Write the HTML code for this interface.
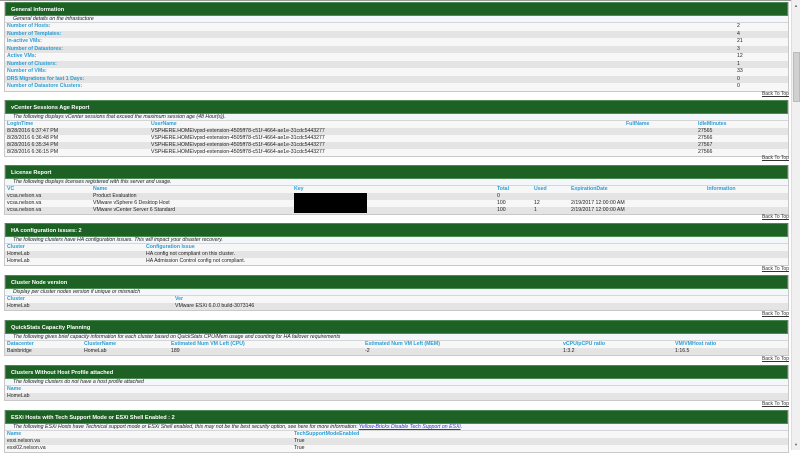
<!DOCTYPE html>
<html><head><meta charset="utf-8"><style>
*{margin:0;padding:0;box-sizing:border-box}
body{width:800px;height:450px;overflow:hidden;background:#fff;font-family:"Liberation Sans",Verdana,sans-serif;font-size:5.2px;color:#222;position:relative}
.sec{position:absolute;left:4px;width:785px;border:1px solid #c8c8c8;border-top:none;background:#f7f7f7}
.h{height:14px;background:#1e6124;color:#fff;font-weight:bold;font-size:5.6px;line-height:14px;padding-left:5px;border:1px solid #4e8a53}
.s{height:7px;line-height:7px;font-style:italic;padding-left:8px;background:#f3f6fa;border-bottom:1px solid #d6d6d6}
.r{position:relative;height:7px;line-height:7px}
.g .r{height:7.5px;line-height:7.5px}
.r span{position:absolute;top:0;white-space:nowrap}
.r.a{background:#e4e4e4}
.th span{color:#2a9fd6;font-weight:bold}
.lab span{color:#2a9fd6;font-weight:bold}
.bt{position:absolute;right:11px;font-size:5px;text-decoration:underline;color:#333}
.sb{position:absolute;right:0;top:0;width:9px;height:450px;background:#f0f0f0;border-left:1px solid #ddd}
</style></head><body>
<div style="position:absolute;left:0;top:0;width:791px;height:1px;background:#999"></div>

<div class="sec g" style="top:2px">
<div class="h">General Information</div>
<div class="s">General details on the infrastucture</div>
<div class="r lab"><span style="left:2px">Number of Hosts:</span><span style="left:732px;color:#222;font-weight:normal">2</span></div>
<div class="r lab a"><span style="left:2px">Number of Templates:</span><span style="left:732px;color:#222;font-weight:normal">4</span></div>
<div class="r lab"><span style="left:2px">In-active VMs:</span><span style="left:732px;color:#222;font-weight:normal">21</span></div>
<div class="r lab a"><span style="left:2px">Number of Datastores:</span><span style="left:732px;color:#222;font-weight:normal">3</span></div>
<div class="r lab"><span style="left:2px">Active VMs:</span><span style="left:732px;color:#222;font-weight:normal">12</span></div>
<div class="r lab a"><span style="left:2px">Number of Clusters:</span><span style="left:732px;color:#222;font-weight:normal">1</span></div>
<div class="r lab"><span style="left:2px">Number of VMs:</span><span style="left:732px;color:#222;font-weight:normal">33</span></div>
<div class="r lab a"><span style="left:2px">DRS Migrations for last 1 Days:</span><span style="left:732px;color:#222;font-weight:normal">0</span></div>
<div class="r lab"><span style="left:2px">Number of Datastore Clusters:</span><span style="left:732px;color:#222;font-weight:normal">0</span></div>
</div>
<div class="bt" style="top:91px">Back To Top</div>

<div class="sec" style="top:100px">
<div class="h">vCenter Sessions Age Report</div>
<div class="s">The following displays vCenter sessions that exceed the maximum session age (48 Hour(s)).</div>
<div class="r th"><span style="left:2px">LoginTime</span><span style="left:146px">UserName</span><span style="left:621px">FullName</span><span style="left:693px">IdleMinutes</span></div>
<div class="r a"><span style="left:2px">8/28/2016 6:37:47 PM</span><span style="left:146px">VSPHERE.HOME\vpxd-extension-4505ff78-c51f-4664-ae1e-31cdc5443277</span><span style="left:693px">27565</span></div>
<div class="r"><span style="left:2px">8/28/2016 6:36:48 PM</span><span style="left:146px">VSPHERE.HOME\vpxd-extension-4505ff78-c51f-4664-ae1e-31cdc5443277</span><span style="left:693px">27566</span></div>
<div class="r a"><span style="left:2px">8/28/2016 6:35:34 PM</span><span style="left:146px">VSPHERE.HOME\vpxd-extension-4505ff78-c51f-4664-ae1e-31cdc5443277</span><span style="left:693px">27567</span></div>
<div class="r"><span style="left:2px">8/28/2016 6:36:15 PM</span><span style="left:146px">VSPHERE.HOME\vpxd-extension-4505ff78-c51f-4664-ae1e-31cdc5443277</span><span style="left:693px">27566</span></div>
</div>
<div class="bt" style="top:155px">Back To Top</div>

<div class="sec" style="top:165px">
<div class="h">License Report</div>
<div class="s">The following displays licenses registered with this server and usage.</div>
<div class="r th"><span style="left:2px">VC</span><span style="left:88px">Name</span><span style="left:289px">Key</span><span style="left:492px">Total</span><span style="left:529px">Used</span><span style="left:566px">ExpirationDate</span><span style="left:702px">Information</span></div>
<div class="r a"><span style="left:2px">vcsa.nelson.va</span><span style="left:88px">Product Evaluation</span><span style="left:492px">0</span></div>
<div class="r"><span style="left:2px">vcsa.nelson.va</span><span style="left:88px">VMware vSphere 6 Desktop Host</span><span style="left:492px">100</span><span style="left:529px">12</span><span style="left:566px">2/19/2017 12:00:00 AM</span></div>
<div class="r a"><span style="left:2px">vcsa.nelson.va</span><span style="left:88px">VMware vCenter Server 6 Standard</span><span style="left:492px">100</span><span style="left:529px">1</span><span style="left:566px">2/19/2017 12:00:00 AM</span></div>
<div style="position:absolute;left:289px;top:28px;width:73px;height:20px;background:#000"></div>
</div>
<div class="bt" style="top:214px">Back To Top</div>

<div class="sec" style="top:223px">
<div class="h">HA configuration issues: 2</div>
<div class="s">The following clusters have HA configuration issues. This will impact your disaster recovery.</div>
<div class="r th"><span style="left:2px">Cluster</span><span style="left:141px">Configuration Issue</span></div>
<div class="r a"><span style="left:2px">HomeLab</span><span style="left:141px">HA config not compliant on this cluster.</span></div>
<div class="r"><span style="left:2px">HomeLab</span><span style="left:141px">HA Admission Control config not compliant.</span></div>
</div>
<div class="bt" style="top:266px">Back To Top</div>

<div class="sec" style="top:275px">
<div class="h">Cluster Node version</div>
<div class="s">Display per cluster nodes version if unique or mismatch</div>
<div class="r th"><span style="left:2px">Cluster</span><span style="left:170px">Ver</span></div>
<div class="r a"><span style="left:2px">HomeLab</span><span style="left:170px">VMware ESXi 6.0.0 build-3073146</span></div>
</div>
<div class="bt" style="top:311px">Back To Top</div>

<div class="sec" style="top:320px">
<div class="h">QuickStats Capacity Planning</div>
<div class="s">The following gives brief capacity information for each cluster based on QuickStats CPU/Mem usage and counting for HA failover requirements</div>
<div class="r th"><span style="left:2px">Datacenter</span><span style="left:79px">ClusterName</span><span style="left:166px">Estimated Num VM Left (CPU)</span><span style="left:360px">Estimated Num VM Left (MEM)</span><span style="left:558px">vCPU/pCPU ratio</span><span style="left:670px">VM/VMHost ratio</span></div>
<div class="r a"><span style="left:2px">Bainbridge</span><span style="left:79px">HomeLab</span><span style="left:166px">189</span><span style="left:360px">-2</span><span style="left:558px">1:3.2</span><span style="left:670px">1:16.5</span></div>
</div>
<div class="bt" style="top:356px">Back To Top</div>

<div class="sec" style="top:365px">
<div class="h">Clusters Without Host Profile attached</div>
<div class="s">The following clusters do not have a host profile attached</div>
<div class="r th"><span style="left:2px">Name</span></div>
<div class="r a"><span style="left:2px">HomeLab</span></div>
</div>
<div class="bt" style="top:401px">Back To Top</div>

<div class="sec" style="top:410px">
<div class="h">ESXi Hosts with Tech Support Mode or ESXi Shell Enabled : 2</div>
<div class="s">The following ESXi Hosts have Technical support mode or ESXi Shell enabled, this may not be the best security option, see here for more information: <span style="color:#33c;text-decoration:underline">Yellow-Bricks Disable Tech Support on ESXi</span>.</div>
<div class="r th"><span style="left:2px">Name</span><span style="left:289px">TechSupportModeEnabled</span></div>
<div class="r a"><span style="left:2px">esxi.nelson.va</span><span style="left:289px">True</span></div>
<div class="r"><span style="left:2px">esxi02.nelson.va</span><span style="left:289px">True</span></div>
</div>

<div class="sb"><div style="position:absolute;left:1px;top:52px;width:7px;height:50px;background:#d0d0d0;border:1px solid #bbb"></div>
<div style="position:absolute;left:2px;top:3px;font-size:4px;color:#666">▲</div>
<div style="position:absolute;left:2px;top:442px;font-size:4px;color:#666">▼</div></div>
</body></html>
